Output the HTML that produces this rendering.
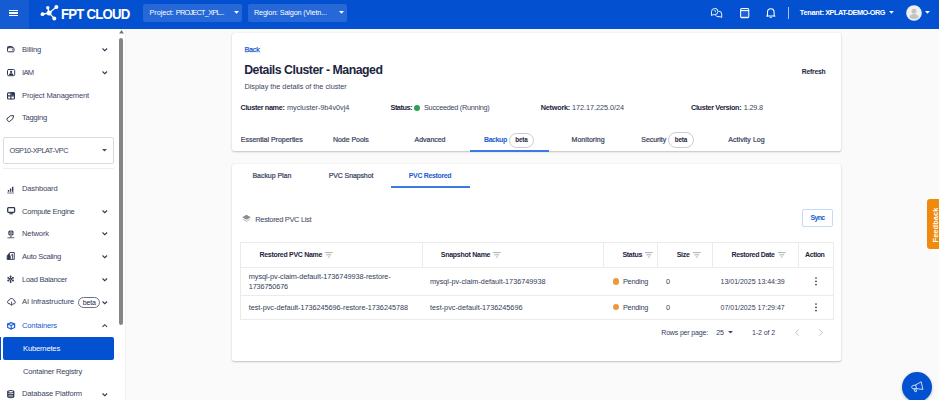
<!DOCTYPE html>
<html lang="en">
<head>
<meta charset="utf-8">
<title>FPT Cloud - Details Cluster</title>
<style>
html,body{margin:0;padding:0;}
body{width:939px;height:400px;overflow:hidden;position:relative;background:#fafafa;font-family:"Liberation Sans",sans-serif;}
.abs{position:absolute;}
.t{position:absolute;white-space:pre;font-family:"Liberation Sans",sans-serif;}
#hdr{left:0;top:0;width:939px;height:28.5px;background:#0351d0;}
#burger{left:0;top:0;width:29px;height:28.5px;background:#155bd2;}
.dd{top:4px;height:18px;background:#2668d7;border-radius:2px;}
#side{left:0;top:28.5px;width:125.3px;height:372px;background:#fff;}
#sbar{left:125px;top:28.5px;width:0.6px;height:372px;background:#f1f1f1;}
#thumb{left:119px;top:38px;width:4.4px;height:287px;background:#858585;border-radius:2.2px;}
.card{background:#fff;border-radius:2.5px;box-shadow:0 1px 2px rgba(0,0,0,.22),0 0 1px rgba(0,0,0,.12);}
.pill{border:0.6px solid #c9ccd3;border-radius:9px;background:#fff;box-sizing:border-box;}
.ln{background:#ebebec;}
svg{position:absolute;overflow:visible;}
</style>
</head>
<body>
<!-- main cards -->
<div class="abs card" style="left:232px;top:32.6px;width:608.6px;height:118.8px;"></div>
<div class="abs card" style="left:232px;top:163.5px;width:608.6px;height:197px;"></div>

<!-- header -->
<div id="hdr" class="abs"></div>
<div id="burger" class="abs"></div>
<div class="abs" style="left:9.2px;top:9.5px;width:9.2px;height:1.4px;background:#fff"></div>
<div class="abs" style="left:9.2px;top:12.2px;width:9.2px;height:1.4px;background:#fff"></div>
<div class="abs" style="left:9.2px;top:14.9px;width:9.2px;height:1.4px;background:#fff"></div>
<!-- logo mark -->
<svg style="left:39px;top:4px" width="22" height="18" viewBox="39 4 22 18">
  <g stroke="#fff" stroke-width="1.3" stroke-linecap="round" fill="none">
    <line x1="42.5" y1="14.2" x2="49.1" y2="13"/>
    <line x1="49.1" y1="13" x2="56.4" y2="7.1"/>
    <line x1="49.1" y1="13" x2="54.3" y2="18.4"/>
    <line x1="49.1" y1="13" x2="47.8" y2="7.8"/>
  </g>
  <g fill="#fff">
    <circle cx="42.5" cy="14.2" r="1.9"/>
    <circle cx="49.1" cy="13" r="2.5"/>
    <circle cx="56.4" cy="7.1" r="2"/>
    <circle cx="54.3" cy="18.4" r="2"/>
    <circle cx="47.8" cy="7.8" r="1.7"/>
  </g>
</svg>
<div class="abs dd" style="left:143.3px;width:98.5px;"></div>
<div class="abs dd" style="left:248px;width:98.5px;"></div>
<svg style="left:233.9px;top:11.1px" width="5" height="2.9" viewBox="0 0 5 3"><path d="M0 0h5L2.5 2.8z" fill="#fff"/></svg>
<svg style="left:338.7px;top:11.1px" width="5" height="2.9" viewBox="0 0 5 3"><path d="M0 0h5L2.5 2.8z" fill="#fff"/></svg>
<svg style="left:889.3px;top:11.1px" width="5" height="2.9" viewBox="0 0 5 3"><path d="M0 0h5L2.5 2.8z" fill="#fff"/></svg>
<svg style="left:925.0px;top:11.1px" width="5" height="2.9" viewBox="0 0 5 3"><path d="M0 0h5L2.5 2.8z" fill="#fff"/></svg>
<!-- header icons -->
<svg style="left:710.5px;top:7.8px" width="11.2" height="10" viewBox="0 0 11.2 10" fill="none" stroke="#fff" stroke-width="0.95" stroke-linejoin="round">
  <path d="M3.700 0.500a3.200 3.200 0 0 0-3.200 3.200v3.900l1.500-0.900h1.700a3.200 3.200 0 0 0 0-6.400z" stroke-width="0.9"/>
  <path d="M7.500 3.100a3.100 3.100 0 0 1 3.200 3.100v3.300l-1.400-.8h-2.200a3.100 3.100 0 0 1-2.600-1.500"/>
  <path d="M2.900 2.900a.9.800 0 1 1 1.200.9v.5M4.100 5.200v.2" stroke-width="0.650"/>
</svg>
<svg style="left:739.8px;top:7.5px" width="9.4" height="10.4" viewBox="0 0 9.4 10.4" fill="none" stroke="#fff" stroke-width="1.05">
  <rect x="0.600" y="0.600" width="8.200" height="9.200" rx="1.300" fill="rgba(255,255,255,0.10)"/>
  <path d="M0.600 2.600h8.200" stroke-width="1.100"/><path d="M1.200 9.300h7" stroke-width="0.900"/>
</svg>
<svg style="left:766.2px;top:7.500px" width="9.600" height="10.200" viewBox="0 0 9.600 10.200" fill="none" stroke="#fff" stroke-width="1.050" stroke-linejoin="round" stroke-linecap="round">
  <path d="M1.500 7.900V4.200a3.300 3.500 0 0 1 6.600 0V7.900"/>
  <path d="M0.600 8h8.400"/>
  <path d="M4.100 9.400h1.400" stroke-width="0.900"/>
</svg>
<div class="abs" style="left:788px;top:6.8px;width:0.8px;height:11.9px;background:#a9c2ef"></div>
<!-- avatar -->
<svg style="left:905.5px;top:4.7px" width="16" height="16" viewBox="0 0 16 16">
  <circle cx="8" cy="8" r="7.8" fill="#f0f0f0"/>
  <circle cx="8" cy="6.2" r="2.5" fill="#c4c4c4"/>
  <path d="M3.2 12.2c.6-2.4 2.6-3.2 4.8-3.2s4.2.8 4.8 3.2a7 7 0 0 1-9.6 0z" fill="#c4c4c4"/>
</svg>

<!-- sidebar -->
<div id="side" class="abs"></div>
<div id="sbar" class="abs"></div>
<div id="thumb" class="abs"></div>
<svg style="left:118.8px;top:30.4px" width="5" height="3.6" viewBox="0 0 4 3"><path d="M0 3h4L2 0z" fill="#757575"/></svg>

<div class="abs" style="left:3px;top:137px;width:110.7px;height:26.5px;border:0.7px solid #d9dbe0;border-radius:2px;box-sizing:border-box;"></div>
<svg style="left:102.2px;top:149.4px" width="5" height="3" viewBox="0 0 5 3"><path d="M0 0h5L2.5 2.6z" fill="#444c63"/></svg>
<div class="abs" style="left:3px;top:167.9px;width:110.7px;height:0.8px;background:#eceef3;"></div>
<div class="abs" style="left:0;top:337px;width:1px;height:22.5px;background:#0351d0;"></div>
<div class="abs" style="left:3px;top:337px;width:110.7px;height:22.5px;background:#0351d0;border-radius:2px;"></div>
<div class="abs pill" style="left:78.3px;top:296.8px;width:21.6px;height:11.4px;border:1px solid #6a7088;"></div>

<!-- chevrons -->
<svg style="left:102.2px;top:48.20px" width="5.6" height="3.4" viewBox="0 0 5.6 3.4" fill="none" stroke="#2f3853" stroke-width="1.05"><path d="M0.5 0.5L2.8 2.7 5.1 0.5"/></svg>
<svg style="left:102.2px;top:71.20px" width="5.6" height="3.4" viewBox="0 0 5.6 3.4" fill="none" stroke="#2f3853" stroke-width="1.05"><path d="M0.5 0.5L2.8 2.7 5.1 0.5"/></svg>
<svg style="left:102.2px;top:210.20px" width="5.6" height="3.4" viewBox="0 0 5.6 3.4" fill="none" stroke="#2f3853" stroke-width="1.05"><path d="M0.5 0.5L2.8 2.7 5.1 0.5"/></svg>
<svg style="left:102.2px;top:232.45px" width="5.6" height="3.4" viewBox="0 0 5.6 3.4" fill="none" stroke="#2f3853" stroke-width="1.05"><path d="M0.5 0.5L2.8 2.7 5.1 0.5"/></svg>
<svg style="left:102.2px;top:255.45px" width="5.6" height="3.4" viewBox="0 0 5.6 3.4" fill="none" stroke="#2f3853" stroke-width="1.05"><path d="M0.5 0.5L2.8 2.7 5.1 0.5"/></svg>
<svg style="left:102.2px;top:278.20px" width="5.6" height="3.4" viewBox="0 0 5.6 3.4" fill="none" stroke="#2f3853" stroke-width="1.05"><path d="M0.5 0.5L2.8 2.7 5.1 0.5"/></svg>
<svg style="left:102.2px;top:300.70px" width="5.6" height="3.4" viewBox="0 0 5.6 3.4" fill="none" stroke="#2f3853" stroke-width="1.05"><path d="M0.5 0.5L2.8 2.7 5.1 0.5"/></svg>
<svg style="left:102.2px;top:392.70px" width="5.6" height="3.4" viewBox="0 0 5.6 3.4" fill="none" stroke="#2f3853" stroke-width="1.05"><path d="M0.5 0.5L2.8 2.7 5.1 0.5"/></svg>
<svg style="left:102.2px;top:324.25px" width="5.6" height="3.4" viewBox="0 0 5.6 3.4" fill="none" stroke="#2f3853" stroke-width="1.05"><path d="M0.5 2.9L2.8 0.7 5.1 2.9"/></svg>
<!-- sidebar icons -->
<svg style="left:6.5px;top:45.8px" width="7.5" height="6.3" viewBox="0 0 7.5 6.3" fill="none" stroke="#2f3853" stroke-width="1.0" stroke-linejoin="round" stroke-linecap="round"><rect x="0.5" y="1.7" width="6.5" height="4.1" rx="0.9"/><path d="M0.5 2.4V1.3a.8.8 0 0 1 .8-.8H4.7a.8.8 0 0 1 .8.8v.4"/><circle cx="5.5" cy="3.8" r=".65" fill="#2f3853" stroke="none"/></svg>
<svg style="left:6.8px;top:68.5px" width="8.2" height="7.2" viewBox="0 0 8.2 7.2" fill="none" stroke="#2f3853" stroke-width="1.0" stroke-linejoin="round" stroke-linecap="round"><rect x="0.5" y="0.5" width="7.2" height="6.2" rx="1.1"/><circle cx="4.1" cy="2.9" r="1.15" fill="#2f3853" stroke="none"/><path d="M1.7 6.2c.2-1.4 1.200-2 2.400-2s2.200.6 2.400 2z" fill="#2f3853" stroke="none"/></svg>
<svg style="left:6.8px;top:91.5px" width="8.2" height="7.6" viewBox="0 0 8.2 7.6" fill="none" stroke="#2f3853" stroke-width="1.1" stroke-linejoin="round" stroke-linecap="round"><rect x="0.55" y="0.9" width="6.9" height="6.1" rx="0.7"/><path d="M3.9 0.9v6.100M0.55 3.900h6.900"/><circle cx="5.9" cy="1.800" r="1.700" fill="#2f3853" stroke="none"/></svg>
<svg style="left:6.5px;top:113.5px" width="8" height="7.6" viewBox="0 0 8 7.6" fill="none" stroke="#2f3853" stroke-width="0.9" stroke-linejoin="round" stroke-linecap="round"><g transform="translate(4 3.800) rotate(-40)"><path d="M-3.400 -1.900h4.300l2.500 1.900-2.500 1.900h-4.300a.9.9 0 0 1-.9-.9v-2a.9.9 0 0 1 .9-.9z"/></g></svg>
<svg style="left:7.3px;top:185.5px" width="7.2" height="7.5" viewBox="0 0 7.2 7.5" fill="none" stroke="#2f3853" stroke-width="1.0" stroke-linejoin="round" stroke-linecap="round"><path d="M0.200 7h6.800" stroke-width="0.700" stroke-linecap="butt"/><path d="M1.500 5.800V4M3.600 5.800V2.500M5.700 5.800V0.700" stroke-width="1.350" stroke-linecap="butt"/></svg>
<svg style="left:6.5px;top:207.4px" width="8.3" height="7.3" viewBox="0 0 8.3 7.3" fill="none" stroke="#2f3853" stroke-width="1.0" stroke-linejoin="round" stroke-linecap="round"><rect x="0.700" y="0.700" width="6.900" height="4.600" rx="0.700" stroke-width="1.300"/><path d="M2.600 6.800h3.100" stroke-width="0.900"/><path d="M4.150 5.500v1.200" stroke-width="1.400" stroke-linecap="butt"/></svg>
<svg style="left:7px;top:230.3px" width="7.8" height="8.4" viewBox="0 0 7.8 8.4" fill="none" stroke="#2f3853" stroke-width="1.0" stroke-linejoin="round" stroke-linecap="round"><circle cx="3.900" cy="3.100" r="2.800" fill="#2f3853" stroke="none"/><path d="M1.200 3.100h5.400M3.900 .4c-1.300 1.500-1.300 3.900 0 5.400M3.900 .4c1.300 1.500 1.300 3.900 0 5.400" stroke="#fff" stroke-width="0.450"/><path d="M3.900 6v1.500" stroke-width="1" stroke-linecap="butt"/><path d="M0.800 7.800h6.200" stroke-width="0.800"/></svg>
<svg style="left:7px;top:252.3px" width="7.8" height="7.9" viewBox="0 0 7.8 7.9" fill="none" stroke="#2f3853" stroke-width="1.0" stroke-linejoin="round" stroke-linecap="round"><path d="M0.500 3.400L3 0.500H7.300V7.400H0.500z" stroke-width="0.900"/><path d="M0.500 3.400L3 .5V7.400H.5z" fill="#2f3853" stroke="none"/><path d="M0.500 3.600h3.200v3.800H.5z" fill="#2f3853" stroke="none"/><path d="M4.400 3.200l1.200-1v4.300" stroke-width="0.900"/></svg>
<svg style="left:7.25px;top:276.35px" width="7.2" height="6.4" viewBox="0 0 7.2 6.4" fill="none" stroke="#2f3853" stroke-width="1.0" stroke-linejoin="round" stroke-linecap="round"><circle cx="3.600" cy="3.200" r="1" stroke-width="0.900"/><path d="M3.600 .8v1.500M3.600 4.100v1.500M1.400 1.900l1.400.8M4.400 3.700l1.400.8M1.400 4.500l1.400-.8M4.400 2.700l1.400-.8" stroke-width="0.900"/><circle cx="3.60" cy="0.45" r=".95" fill="#2f3853" stroke="none"/><circle cx="3.60" cy="5.95" r=".95" fill="#2f3853" stroke="none"/><circle cx="1.22" cy="1.83" r=".95" fill="#2f3853" stroke="none"/><circle cx="5.98" cy="1.83" r=".95" fill="#2f3853" stroke="none"/><circle cx="1.22" cy="4.58" r=".95" fill="#2f3853" stroke="none"/><circle cx="5.98" cy="4.58" r=".95" fill="#2f3853" stroke="none"/></svg>
<svg style="left:6.5px;top:297.8px" width="8.8" height="8" viewBox="0 0 8.8 8" fill="none" stroke="#2f3853" stroke-width="1.0" stroke-linejoin="round" stroke-linecap="round"><path d="M2.700 5.900c-1.300 0-2.100-.8-2.100-1.900 0-1 .7-1.700 1.600-1.800C2.500 1.100 3.400.500 4.500.500c1.300 0 2.300.9 2.500 2.100.8.200 1.300.8 1.300 1.600 0 1-.7 1.700-1.700 1.700h-.5"/><path d="M4.500 4v3.200M3.500 6.300l1 1 1-1" stroke-width="0.800"/></svg>
<svg style="left:6.5px;top:321.9px" width="8.3" height="7.7" viewBox="0 0 8.3 7.7" fill="none" stroke="#1a5cd0" stroke-width="1.15" stroke-linejoin="round" stroke-linecap="round"><path d="M4.150 .6l3.500 1.400v3.600l-3.500 1.500-3.500-1.500V2z"/><path d="M.65 2l3.500 1.500 3.500-1.500M4.150 3.500v3.600"/></svg>
<svg style="left:7px;top:389.7px" width="7.5" height="8.4" viewBox="0 0 7.5 8.4" fill="none" stroke="#2f3853" stroke-width="1.05" stroke-linejoin="round" stroke-linecap="round"><ellipse cx="3.750" cy="1.800" rx="3.100" ry="1.200"/><path d="M.65 1.800v4.800c0 .7 1.400 1.200 3.100 1.200s3.100-.5 3.100-1.200V1.800M.65 3.500c0 .7 1.400 1.200 3.100 1.200s3.100-.5 3.100-1.200M.65 5.100c0 .7 1.400 1.200 3.100 1.200s3.100-.5 3.100-1.200"/></svg>

<!-- card1 bits -->
<div class="abs" style="left:414px;top:104.7px;width:6.2px;height:6.2px;border-radius:50%;background:#2f9e5b;"></div>
<div class="abs pill" style="left:508.7px;top:132.5px;width:25.6px;height:15.3px;"></div>
<div class="abs pill" style="left:668.2px;top:132.3px;width:25.6px;height:15.6px;"></div>
<div class="abs" style="left:469.5px;top:150px;width:79.3px;height:1.9px;background:#3b79e3;"></div>

<!-- card2 bits -->
<div class="abs" style="left:390.5px;top:185.7px;width:79px;height:1.9px;background:#3b79e3;"></div>
<svg style="left:241.8px;top:214.2px" width="9" height="9.5" viewBox="0 0 9 9.5">
  <path d="M4.500 0.700L8.800 3.200 4.500 5.700 0.200 3.200z" fill="#8e8e8e"/>
  <path d="M0.800 5.200L4.500 7.400 8.200 5.200" fill="none" stroke="#bcbcbc" stroke-width="1"/>
</svg>
<div class="abs" style="left:801.6px;top:209.3px;width:31.9px;height:17.6px;border:1px solid #c9d8f6;border-radius:2px;box-sizing:border-box;background:#fff;"></div>

<!-- table -->
<div class="abs ln" style="left:240.2px;top:241.6px;width:593.3px;height:0.7px;"></div><div class="abs ln" style="left:240.2px;top:319px;width:593.3px;height:0.7px;"></div><div class="abs ln" style="left:240.2px;top:241.6px;width:0.7px;height:78px;"></div><div class="abs ln" style="left:832.9px;top:241.6px;width:0.7px;height:78px;"></div>
<div class="abs ln" style="left:240.5px;top:267.2px;width:593px;height:0.6px;"></div>
<div class="abs ln" style="left:240.5px;top:295px;width:593px;height:0.6px;"></div>
<div class="abs ln" style="left:421.7px;top:241.7px;width:0.6px;height:26px;"></div>
<div class="abs ln" style="left:603.2px;top:241.7px;width:0.6px;height:26px;"></div>
<div class="abs ln" style="left:657.4px;top:241.7px;width:0.6px;height:26px;"></div>
<div class="abs ln" style="left:712px;top:241.7px;width:0.6px;height:26px;"></div>
<div class="abs ln" style="left:798.2px;top:241.7px;width:0.6px;height:26px;"></div>
<svg style="left:325px;top:252px" width="7.6" height="5.6" viewBox="0 0 7.6 5.6" stroke="#999" stroke-width="0.8"><path d="M0 0.6h7.6M1.4 2.8h4.8M2.9 5h1.8"/></svg>
<svg style="left:493px;top:252px" width="7.6" height="5.6" viewBox="0 0 7.6 5.6" stroke="#999" stroke-width="0.8"><path d="M0 0.6h7.6M1.4 2.8h4.8M2.9 5h1.8"/></svg>
<svg style="left:645px;top:252px" width="7.6" height="5.6" viewBox="0 0 7.6 5.6" stroke="#999" stroke-width="0.8"><path d="M0 0.6h7.6M1.4 2.8h4.8M2.9 5h1.8"/></svg>
<svg style="left:692.5px;top:252px" width="7.6" height="5.6" viewBox="0 0 7.6 5.6" stroke="#999" stroke-width="0.8"><path d="M0 0.6h7.6M1.4 2.8h4.8M2.9 5h1.8"/></svg>
<svg style="left:777.5px;top:252px" width="7.6" height="5.6" viewBox="0 0 7.6 5.6" stroke="#999" stroke-width="0.8"><path d="M0 0.6h7.6M1.4 2.8h4.8M2.9 5h1.8"/></svg>
<div class="abs" style="left:612.8px;top:278.3px;width:6.4px;height:6.4px;border-radius:50%;background:#ea9a3e;"></div>
<div class="abs" style="left:612.8px;top:304.1px;width:6.4px;height:6.4px;border-radius:50%;background:#ea9a3e;"></div>
<svg style="left:814.5px;top:277.3px" width="2" height="9" viewBox="0 0 2 9" fill="#2b3350"><circle cx="1" cy="1" r=".85"/><circle cx="1" cy="4.3" r=".85"/><circle cx="1" cy="7.6" r=".85"/></svg>
<svg style="left:814.5px;top:303.2px" width="2" height="9" viewBox="0 0 2 9" fill="#2b3350"><circle cx="1" cy="1" r=".85"/><circle cx="1" cy="4.3" r=".85"/><circle cx="1" cy="7.6" r=".85"/></svg>
<svg style="left:728px;top:331px" width="5" height="3" viewBox="0 0 5 3"><path d="M0 0h5L2.5 2.6z" fill="#444c63"/></svg>
<svg style="left:794.5px;top:328.5px" width="4" height="7" viewBox="0 0 4 7" fill="none" stroke="#b9bcc4" stroke-width="0.9"><path d="M3.5 0.5L0.7 3.5 3.5 6.5"/></svg>
<svg style="left:818.5px;top:328.5px" width="4" height="7" viewBox="0 0 4 7" fill="none" stroke="#b9bcc4" stroke-width="0.9"><path d="M0.5 0.5L3.3 3.5 0.5 6.5"/></svg>

<!-- feedback -->
<div class="abs" style="left:926.8px;top:199.4px;width:13px;height:50px;background:#f08a0c;border-radius:3px 0 0 3px;"></div>
<span class="t" style="left:935.8px;top:224.6px;font-size:7.4px;line-height:8px;font-weight:700;color:#fff;transform:translate(-50%,-50%) rotate(-90deg);letter-spacing:0.1px;">Feedback</span>
<!-- fab -->
<div class="abs" style="left:902.2px;top:372px;width:30px;height:30px;border-radius:50%;background:#0351d0;box-shadow:0 1px 3px rgba(0,0,0,.25);"></div>
<svg style="left:910.5px;top:381px" width="13" height="12" viewBox="0 0 13 12" fill="none" stroke="#fff" stroke-width="0.8" stroke-linejoin="round">
  <path d="M4.6 3.9L10.2 0.8 11.9 8.4 5.6 7.7z"/>
  <path d="M4.6 3.9L1.9 4.6a1.6 1.6 0 0 0 .8 3.1l2.9 0"/>
  <path d="M2.9 7.8l1.2 3 1.5-.5-1-2.6"/>
</svg>

<span class="t" style="left:61px;top:3.7px;font-size:15.4px;line-height:20px;font-weight:700;color:#fff;transform-origin:0 50%;transform:scaleX(0.856);letter-spacing:-0.9px;">FPT CLOUD</span>
<span class="t" style="left:149.50px;top:7.94px;font-size:7.3px;line-height:10.22px;font-weight:400;color:#fff;letter-spacing:-0.062px;">Project:</span>
<span class="t" style="left:175.75px;top:7.94px;font-size:7.3px;line-height:10.22px;font-weight:400;color:#fff;letter-spacing:-0.714px;">PROJECT_XPL...</span>
<span class="t" style="left:254.00px;top:7.94px;font-size:7.3px;line-height:10.22px;font-weight:400;color:#fff;letter-spacing:-0.175px;">Region: Saigon (Vietn...</span>
<span class="t" style="left:799.70px;top:7.94px;font-size:7.3px;line-height:10.22px;font-weight:700;color:#fff;letter-spacing:-0.216px;">Tenant:</span>
<span class="t" style="left:825.20px;top:7.94px;font-size:7.3px;line-height:10.22px;font-weight:700;color:#fff;letter-spacing:-0.469px;">XPLAT-DEMO-ORG</span>
<span class="t" style="left:22.00px;top:44.75px;font-size:7.6px;line-height:10.64px;font-weight:400;color:#3b445f;letter-spacing:-0.181px;">Billing</span>
<span class="t" style="left:22.00px;top:67.75px;font-size:7.6px;line-height:10.64px;font-weight:400;color:#3b445f;letter-spacing:-0.672px;">IAM</span>
<span class="t" style="left:22.00px;top:90.55px;font-size:7.6px;line-height:10.64px;font-weight:400;color:#3b445f;letter-spacing:-0.171px;">Project Management</span>
<span class="t" style="left:22.00px;top:113.25px;font-size:7.6px;line-height:10.64px;font-weight:400;color:#3b445f;letter-spacing:-0.230px;">Tagging</span>
<span class="t" style="left:22.00px;top:183.75px;font-size:7.6px;line-height:10.64px;font-weight:400;color:#3b445f;letter-spacing:-0.184px;">Dashboard</span>
<span class="t" style="left:22.00px;top:206.75px;font-size:7.6px;line-height:10.64px;font-weight:400;color:#3b445f;letter-spacing:-0.291px;">Compute Engine</span>
<span class="t" style="left:22.00px;top:229.00px;font-size:7.6px;line-height:10.64px;font-weight:400;color:#3b445f;letter-spacing:-0.123px;">Network</span>
<span class="t" style="left:22.00px;top:252.00px;font-size:7.6px;line-height:10.64px;font-weight:400;color:#3b445f;letter-spacing:-0.303px;">Auto Scaling</span>
<span class="t" style="left:22.00px;top:274.75px;font-size:7.6px;line-height:10.64px;font-weight:400;color:#3b445f;letter-spacing:-0.306px;">Load Balancer</span>
<span class="t" style="left:22.00px;top:297.25px;font-size:7.6px;line-height:10.64px;font-weight:400;color:#3b445f;letter-spacing:-0.105px;">AI Infrastructure</span>
<span class="t" style="left:22.00px;top:389.25px;font-size:7.6px;line-height:10.64px;font-weight:400;color:#3b445f;letter-spacing:-0.170px;">Database Platform</span>
<span class="t" style="left:22.00px;top:321.00px;font-size:7.6px;line-height:10.64px;font-weight:400;color:#1a5cd0;letter-spacing:-0.173px;">Containers</span>
<span class="t" style="left:23.00px;top:343.75px;font-size:7.6px;line-height:10.64px;font-weight:400;color:#fff;letter-spacing:-0.184px;">Kubernetes</span>
<span class="t" style="left:23.00px;top:366.50px;font-size:7.6px;line-height:10.64px;font-weight:400;color:#3b445f;letter-spacing:-0.216px;">Container Registry</span>
<span class="t" style="left:9.50px;top:145.94px;font-size:7.3px;line-height:10.22px;font-weight:400;color:#3b445f;letter-spacing:-0.471px;">OSP10-XPLAT-VPC</span>
<span class="t" style="left:82.75px;top:297.93px;font-size:7px;line-height:9.8px;font-weight:400;color:#1d2540;letter-spacing:-0.194px;">beta</span>
<span class="t" style="left:244.50px;top:45.19px;font-size:7.3px;line-height:10.22px;font-weight:400;color:#1a5cd0;letter-spacing:-0.309px;-webkit-text-stroke:0.25px #1a5cd0;">Back</span>
<span class="t" style="left:244.20px;top:61.61px;font-size:12.3px;line-height:17.22px;font-weight:700;color:#1d2540;letter-spacing:-0.482px;">Details Cluster - Managed</span>
<span class="t" style="left:244.50px;top:82.44px;font-size:7.3px;line-height:10.22px;font-weight:400;color:#3b445f;letter-spacing:-0.023px;">Display the details of the cluster</span>
<span class="t" style="left:240.50px;top:103.44px;font-size:7.3px;line-height:10.22px;font-weight:700;color:#1d2540;letter-spacing:-0.359px;">Cluster name:</span>
<span class="t" style="left:287.00px;top:103.44px;font-size:7.3px;line-height:10.22px;font-weight:400;color:#3b445f;letter-spacing:-0.034px;">mycluster-9b4v0vj4</span>
<span class="t" style="left:390.50px;top:103.44px;font-size:7.3px;line-height:10.22px;font-weight:700;color:#1d2540;letter-spacing:-0.462px;">Status:</span>
<span class="t" style="left:424.00px;top:103.44px;font-size:7.3px;line-height:10.22px;font-weight:400;color:#3b445f;letter-spacing:-0.268px;">Succeeded (Running)</span>
<span class="t" style="left:540.75px;top:103.44px;font-size:7.3px;line-height:10.22px;font-weight:700;color:#1d2540;letter-spacing:-0.246px;">Network:</span>
<span class="t" style="left:572.00px;top:103.44px;font-size:7.3px;line-height:10.22px;font-weight:400;color:#3b445f;letter-spacing:-0.050px;">172.17.225.0/24</span>
<span class="t" style="left:691.00px;top:103.44px;font-size:7.3px;line-height:10.22px;font-weight:700;color:#1d2540;letter-spacing:-0.357px;">Cluster Version:</span>
<span class="t" style="left:743.75px;top:103.44px;font-size:7.3px;line-height:10.22px;font-weight:400;color:#3b445f;letter-spacing:-0.174px;">1.29.8</span>
<span class="t" style="left:801.75px;top:67.25px;font-size:6.8px;line-height:9.52px;font-weight:700;color:#1d2540;letter-spacing:-0.223px;">Refresh</span>
<span class="t" style="left:240.75px;top:135.12px;font-size:7px;line-height:9.8px;font-weight:400;color:#3b445f;letter-spacing:-0.013px;-webkit-text-stroke:0.22px #3b445f;">Essential Properties</span>
<span class="t" style="left:333.00px;top:135.12px;font-size:7px;line-height:9.8px;font-weight:400;color:#3b445f;letter-spacing:-0.045px;-webkit-text-stroke:0.22px #3b445f;">Node Pools</span>
<span class="t" style="left:414.50px;top:135.12px;font-size:7px;line-height:9.8px;font-weight:400;color:#3b445f;letter-spacing:-0.018px;-webkit-text-stroke:0.22px #3b445f;">Advanced</span>
<span class="t" style="left:484.00px;top:135.12px;font-size:7px;line-height:9.8px;font-weight:700;color:#1a5cd0;letter-spacing:-0.424px;">Backup</span>
<span class="t" style="left:515.25px;top:135.76px;font-size:6.3px;line-height:8.82px;font-weight:700;color:#1d2540;letter-spacing:-0.176px;">beta</span>
<span class="t" style="left:571.50px;top:135.12px;font-size:7px;line-height:9.8px;font-weight:400;color:#3b445f;letter-spacing:0.056px;-webkit-text-stroke:0.22px #3b445f;">Monitoring</span>
<span class="t" style="left:641.25px;top:135.12px;font-size:7px;line-height:9.8px;font-weight:400;color:#3b445f;letter-spacing:-0.037px;-webkit-text-stroke:0.22px #3b445f;">Security</span>
<span class="t" style="left:674.75px;top:135.76px;font-size:6.3px;line-height:8.82px;font-weight:700;color:#1d2540;letter-spacing:-0.113px;">beta</span>
<span class="t" style="left:728.25px;top:135.12px;font-size:7px;line-height:9.8px;font-weight:400;color:#3b445f;letter-spacing:0.059px;-webkit-text-stroke:0.22px #3b445f;">Activity Log</span>
<span class="t" style="left:252.50px;top:170.62px;font-size:7px;line-height:9.8px;font-weight:400;color:#3b445f;letter-spacing:-0.051px;-webkit-text-stroke:0.22px #3b445f;">Backup Plan</span>
<span class="t" style="left:328.75px;top:170.62px;font-size:7px;line-height:9.8px;font-weight:400;color:#3b445f;letter-spacing:-0.118px;-webkit-text-stroke:0.22px #3b445f;">PVC Snapshot</span>
<span class="t" style="left:408.75px;top:170.62px;font-size:7px;line-height:9.8px;font-weight:700;color:#1a5cd0;letter-spacing:-0.349px;">PVC Restored</span>
<span class="t" style="left:255.25px;top:214.56px;font-size:7.5px;line-height:10.5px;font-weight:400;color:#3b445f;letter-spacing:-0.335px;">Restored PVC List</span>
<span class="t" style="left:810.50px;top:213.38px;font-size:7px;line-height:9.8px;font-weight:700;color:#1a5cd0;letter-spacing:-0.684px;">Sync</span>
<span class="t" style="left:259.50px;top:250.12px;font-size:7px;line-height:9.8px;font-weight:700;color:#1d2540;letter-spacing:-0.306px;">Restored PVC Name</span>
<span class="t" style="left:440.75px;top:250.12px;font-size:7px;line-height:9.8px;font-weight:700;color:#1d2540;letter-spacing:-0.262px;">Snapshot Name</span>
<span class="t" style="left:622.50px;top:250.12px;font-size:7px;line-height:9.8px;font-weight:700;color:#1d2540;letter-spacing:-0.318px;">Status</span>
<span class="t" style="left:676.75px;top:250.12px;font-size:7px;line-height:9.8px;font-weight:700;color:#1d2540;letter-spacing:-0.316px;">Size</span>
<span class="t" style="left:731.50px;top:250.12px;font-size:7px;line-height:9.8px;font-weight:700;color:#1d2540;letter-spacing:-0.344px;">Restored Date</span>
<span class="t" style="left:805.00px;top:250.12px;font-size:7px;line-height:9.8px;font-weight:700;color:#1d2540;letter-spacing:-0.380px;">Action</span>
<span class="t" style="left:248.75px;top:271.94px;font-size:7.3px;line-height:10.22px;font-weight:400;color:#333c58;letter-spacing:-0.038px;">mysql-pv-claim-default-1736749938-restore-</span>
<span class="t" style="left:248.75px;top:282.44px;font-size:7.3px;line-height:10.22px;font-weight:400;color:#333c58;letter-spacing:-0.134px;">1736750676</span>
<span class="t" style="left:430.00px;top:276.94px;font-size:7.3px;line-height:10.22px;font-weight:400;color:#333c58;letter-spacing:-0.015px;">mysql-pv-claim-default-1736749938</span>
<span class="t" style="left:623.00px;top:276.94px;font-size:7.3px;line-height:10.22px;font-weight:400;color:#333c58;letter-spacing:-0.254px;">Pending</span>
<span class="t" style="left:666.00px;top:276.94px;font-size:7.3px;line-height:10.22px;font-weight:400;color:#333c58;letter-spacing:-0.562px;">0</span>
<span class="t" style="left:720.50px;top:277.12px;font-size:7px;line-height:9.8px;font-weight:400;color:#333c58;letter-spacing:0.001px;">13/01/2025 13:44:39</span>
<span class="t" style="left:248.75px;top:302.94px;font-size:7.3px;line-height:10.22px;font-weight:400;color:#333c58;letter-spacing:-0.039px;">test-pvc-default-1736245696-restore-1736245788</span>
<span class="t" style="left:430.00px;top:302.94px;font-size:7.3px;line-height:10.22px;font-weight:400;color:#333c58;letter-spacing:-0.015px;">test-pvc-default-1736245696</span>
<span class="t" style="left:623.00px;top:302.94px;font-size:7.3px;line-height:10.22px;font-weight:400;color:#333c58;letter-spacing:-0.254px;">Pending</span>
<span class="t" style="left:666.00px;top:302.94px;font-size:7.3px;line-height:10.22px;font-weight:400;color:#333c58;letter-spacing:-0.562px;">0</span>
<span class="t" style="left:720.50px;top:303.12px;font-size:7px;line-height:9.8px;font-weight:400;color:#333c58;letter-spacing:0.001px;">07/01/2025 17:29:47</span>
<span class="t" style="left:661.25px;top:327.62px;font-size:7px;line-height:9.8px;font-weight:400;color:#333c58;letter-spacing:-0.163px;">Rows per page:</span>
<span class="t" style="left:716.25px;top:327.62px;font-size:7px;line-height:9.8px;font-weight:400;color:#333c58;letter-spacing:-0.023px;">25</span>
<span class="t" style="left:752.00px;top:327.62px;font-size:7px;line-height:9.8px;font-weight:400;color:#333c58;letter-spacing:-0.094px;">1-2 of 2</span>
</body>
</html>
